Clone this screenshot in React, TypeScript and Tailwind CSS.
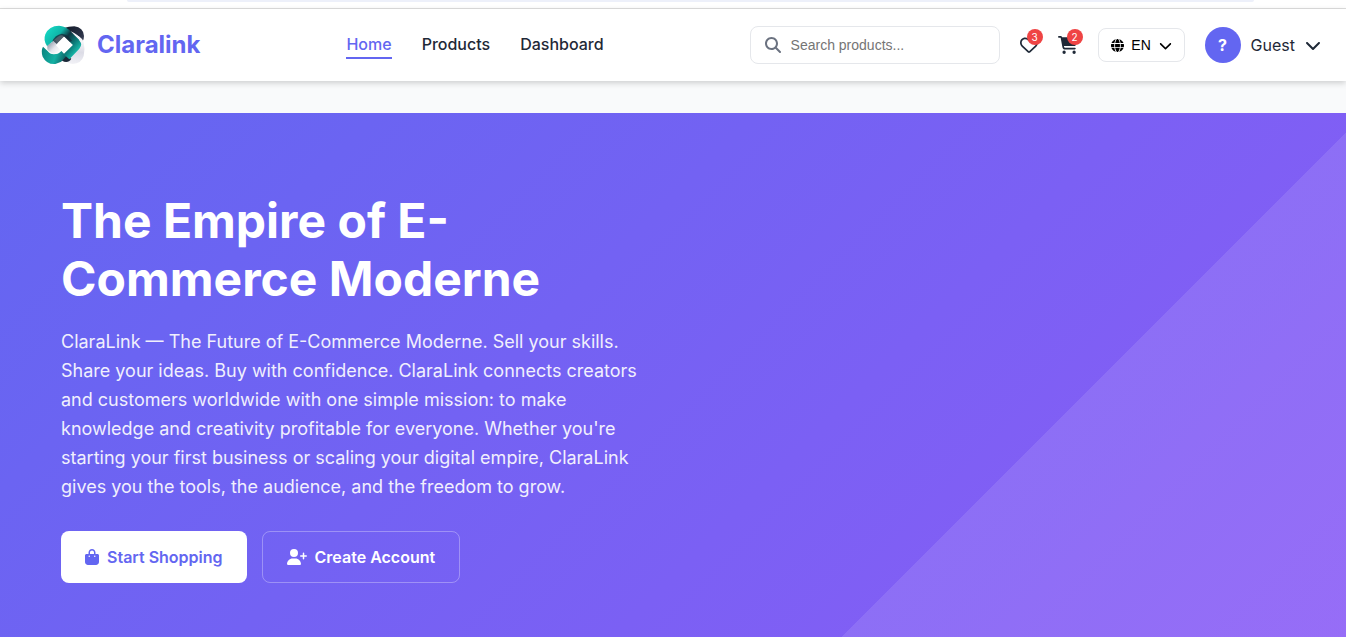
import { useState } from 'react';
import type { ReactNode } from 'react';
import {
  FaBagShopping,
  FaCartShopping,
  FaChevronDown,
  FaGlobe,
  FaMagnifyingGlass,
  FaRegHeart,
  FaUserPlus,
} from 'react-icons/fa6';

const NAV_LINKS = ['Home', 'Products', 'Dashboard'];

function LogoMark() {
  return (
    <svg className="w-[50px] h-[50px]" viewBox="0 0 150 150" fill="none" aria-hidden="true">
      <defs>
        <linearGradient id="navy" x1="75" y1="25" x2="125" y2="75" gradientUnits="userSpaceOnUse">
          <stop offset="0" stopColor="#151c2b" />
          <stop offset="0.7" stopColor="#2b3247" />
          <stop offset="1" stopColor="#4b5166" />
        </linearGradient>
        <linearGradient id="pearl" x1="120" y1="50" x2="105" y2="132" gradientUnits="userSpaceOnUse">
          <stop offset="0" stopColor="#ffffff" />
          <stop offset="0.55" stopColor="#dcdce6" />
          <stop offset="1" stopColor="#f1f1f6" />
        </linearGradient>
        <linearGradient id="tealTop" x1="20" y1="35" x2="105" y2="105" gradientUnits="userSpaceOnUse">
          <stop offset="0" stopColor="#14d3c0" />
          <stop offset="0.3" stopColor="#0fb5a8" />
          <stop offset="0.52" stopColor="#0e3440" />
          <stop offset="0.78" stopColor="#0c7d7b" />
          <stop offset="1" stopColor="#18bfae" />
        </linearGradient>
        <linearGradient id="tealBottom" x1="5" y1="90" x2="90" y2="120" gradientUnits="userSpaceOnUse">
          <stop offset="0" stopColor="#0b8580" />
          <stop offset="0.5" stopColor="#14b0a3" />
          <stop offset="0.8" stopColor="#0f6a6b" />
          <stop offset="1" stopColor="#152433" />
        </linearGradient>
        <linearGradient id="fold" x1="28" y1="70" x2="58" y2="98" gradientUnits="userSpaceOnUse">
          <stop offset="0" stopColor="#9aa3b1" />
          <stop offset="0.5" stopColor="#e6e7ee" />
          <stop offset="1" stopColor="#ffffff" />
        </linearGradient>
      </defs>
      <path d="M72 24 Q86 19 103 19 Q130 22 132 48 Q132 58 128 64 Q112 46 92 44 Z" fill="url(#navy)" />
      <path d="M92 42 Q122 44 131 66 Q136 88 131 108 Q124 131 98 132 Q82 131 76 120 L112 80 Z" fill="url(#pearl)" />
      <path d="M9 80 Q2 92 8 110 Q20 134 46 132 Q60 130 74 118 L88 104 L70 88 L54 100 Q34 108 22 92 Z" fill="url(#tealBottom)" />
      <path d="M66 122 L80 108 L94 116 Q84 132 66 122 Z" fill="#1b2838" />
      <path d="M22 76 L46 60 L70 88 L56 100 Q36 108 22 88 Z" fill="url(#fold)" />
      <path
        d="M21 78 Q9 62 16 43 Q27 17 57 17 Q75 18 87 29 L117 58 Q130 72 118 86 L88 118 L70 102 L98 75 L73 50 Q64 42 56 49 Q44 58 36 66 Z"
        fill="url(#tealTop)"
      />
      <path d="M36 66 Q44 44 66 41 Q78 42 86 50 L96 62 L88 67 L71 51 L50 72 L40 63 Z" fill="#172b3b" opacity="0.75" />
      <path d="M73 50 L98 75 L72 101 L48 76 Z" fill="#ffffff" />
      <path d="M92 34 Q114 42 128 64 Q128 70 126 74 L116 58 Z" fill="#f4f4f8" />
    </svg>
  );
}

interface IconButtonProps {
  label: string;
  count: number;
  children: ReactNode;
}

function IconButton({ label, count, children }: IconButtonProps) {
  return (
    <button type="button" aria-label={label} className="relative flex cursor-pointer text-[#1f2937]">
      {children}
      <span className="absolute -top-[7px] left-full -ml-[11px] flex size-4 items-center justify-center rounded-full bg-[#ef4444] text-[10px] text-white">
        {count}
      </span>
    </button>
  );
}

function Header() {
  const [active, setActive] = useState('Home');
  const [query, setQuery] = useState('');

  return (
    <header className="relative z-10 flex h-[72px] shrink-0 items-center justify-between bg-white pl-10 pr-[25px] shadow-[0_2px_6px_rgba(0,0,0,0.18)]">
      <a href="#" className="flex items-center gap-[7px] text-2xl font-bold text-[#6366f1]">
        <LogoMark />
        Claralink
      </a>

      <nav className="flex gap-[30px]">
        {NAV_LINKS.map((link) => (
          <a
            key={link}
            href="#"
            onClick={() => setActive(link)}
            className={`border-b-2 py-px text-base font-medium ${
              active === link ? 'border-[#6366f1] text-[#6366f1]' : 'border-transparent text-[#1f2937]'
            }`}
          >
            {link}
          </a>
        ))}
      </nav>

      <div className="flex items-center gap-5">
        <label className="flex h-[38px] w-[250px] items-center gap-2.5 rounded-lg border border-gray-200 px-3.5">
          <FaMagnifyingGlass className="size-4 shrink-0 text-[#6b7280]" />
          <input
            type="text"
            aria-label="Search products"
            placeholder="Search products..."
            value={query}
            onChange={(e) => setQuery(e.target.value)}
            className="w-full font-['Liberation_Sans',sans-serif] text-sm outline-none placeholder:text-[#757575]"
          />
        </label>
        <IconButton label="Wishlist" count={3}>
          <FaRegHeart className="size-[18px]" />
        </IconButton>
        <IconButton label="Cart" count={2}>
          <FaCartShopping className="h-[18px] w-5" />
        </IconButton>
        <button
          type="button"
          className="flex h-[34px] w-[87px] cursor-pointer items-center justify-between rounded-lg border border-gray-200 px-3 font-['Liberation_Sans',sans-serif] text-sm text-black"
        >
          <FaGlobe className="size-[13px]" />
          EN
          <FaChevronDown className="size-[13px]" />
        </button>
        <button type="button" className="flex cursor-pointer items-center gap-2.5 text-base text-[#1f2937]">
          <span className="flex size-9 items-center justify-center rounded-full bg-[#6366f1] font-bold text-white">?</span>
          Guest
          <FaChevronDown className="size-4" />
        </button>
      </div>
    </header>
  );
}

function Hero() {
  return (
    <section className="relative shrink-0 bg-[linear-gradient(135deg,#6366f1,#8b5cf6)] px-[61px] pt-[79px] pb-20 text-white">
      <div className="absolute inset-0 bg-[linear-gradient(135deg,transparent_72%,rgba(255,255,255,0.1)_72%)]" />
      <div className="relative max-w-[600px]">
        <h1 className="mb-[19px] text-5xl leading-[58px] font-bold">The Empire of E-Commerce Moderne</h1>
        <p className="mb-[30px] text-lg leading-[29px] opacity-90">
          ClaraLink — The Future of E-Commerce Moderne. Sell your skills. Share your ideas. Buy with confidence.
          ClaraLink connects creators and customers worldwide with one simple mission: to make knowledge and
          creativity profitable for everyone. Whether you're starting your first business or scaling your digital
          empire, ClaraLink gives you the tools, the audience, and the freedom to grow.
        </p>
        <div className="flex gap-[15px]">
          <a
            href="#"
            className="flex h-[52px] items-center gap-2 rounded-lg bg-white px-6 pb-px text-base font-semibold text-[#6366f1]"
          >
            <FaBagShopping className="h-4 w-3.5" />
            Start Shopping
          </a>
          <a
            href="#"
            className="flex h-[52px] items-center gap-2 rounded-lg border border-white/30 px-6 pb-px text-base font-semibold"
          >
            <FaUserPlus className="h-4 w-5" />
            Create Account
          </a>
        </div>
      </div>
    </section>
  );
}

export default function App() {
  return (
    <div className="flex h-screen flex-col overflow-hidden bg-[#f9fafb] font-['Inter',sans-serif]">
      <div className="h-[9px] shrink-0 border-b border-[#dedede] bg-white pr-[92px] pl-[127px]">
        <div className="h-0.5 rounded-b-full bg-[#edf0fa]" />
      </div>
      <Header />
      <main className="mt-8 flex flex-col">
        <Hero />
      </main>
    </div>
  );
}
